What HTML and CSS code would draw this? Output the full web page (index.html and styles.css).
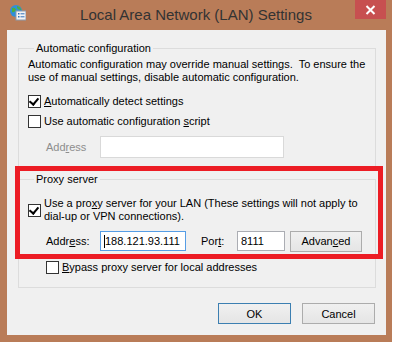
FILE: index.html
```html
<!DOCTYPE html>
<html lang="en">
<head>
    <meta charset="UTF-8">
    <title>Local Area Network (LAN) Settings</title>
    <link rel="stylesheet" href="styles.css">
</head>
<body>
    <div class="window">
        <div class="titlebar">
            <svg class="app-icon" width="17" height="17" viewBox="0 0 17 17">
                <circle cx="7" cy="7" r="6" fill="#2f8fd8"/>
                <path d="M3 4 Q6 3 7 6 Q5 9 3 8 Z" fill="#4cae3e"/>
                <path d="M8 2 Q12 3 12 6 Q9 6 8 4 Z" fill="#4cae3e"/>
                <rect x="7" y="7" width="10" height="9" fill="#f4f4f4" stroke="#8a9bb0" stroke-width="1"/>
                <rect x="9" y="9" width="1.5" height="1.5" fill="#2f6fb8"/>
                <rect x="11.5" y="9.3" width="4" height="1" fill="#2f6fb8"/>
                <rect x="9" y="12" width="1.5" height="1.5" fill="#2f6fb8"/>
                <rect x="11.5" y="12.3" width="4" height="1" fill="#2f6fb8"/>
            </svg>
            <span class="title">Local Area Network (LAN) Settings</span>
            <div class="close-btn">
                <svg width="11" height="10" viewBox="0 0 11 10">
                    <path d="M1.5 1 L9.5 9 M9.5 1 L1.5 9" stroke="#fff" stroke-width="2"/>
                </svg>
            </div>
        </div>

        <div class="client">
            <fieldset class="group group-auto">
                <legend>Automatic configuration</legend>
                <p class="note">Automatic configuration may override manual settings.&nbsp; To ensure the<br>use of manual settings, disable automatic configuration.</p>
                <label class="check">
                    <span class="box checked"></span>
                    <span><u>A</u>utomatically detect settings</span>
                </label>
                <label class="check">
                    <span class="box"></span>
                    <span>Use automatic configuration <u>s</u>cript</span>
                </label>
                <div class="field-row disabled">
                    <span class="field-label">Add<u>r</u>ess</span>
                    <span class="textbox wide"></span>
                </div>
            </fieldset>

            <fieldset class="group group-proxy">
                <legend>Proxy server</legend>
                <label class="check top">
                    <span class="box checked"></span>
                    <span>Use a pro<u>x</u>y server for your LAN (These settings will not apply to<br>dial-up or VPN connections).</span>
                </label>
                <div class="field-row">
                    <span class="field-label">Addr<u>e</u>ss:</span>
                    <span class="textbox addr focused"><span class="caret"></span>188.121.93.111</span>
                    <span class="port-label">Por<u>t</u>:</span>
                    <span class="textbox port">8111</span>
                    <span class="button advanced">Advan<u>c</u>ed</span>
                </div>
                <label class="check indent">
                    <span class="box"></span>
                    <span><u>B</u>ypass proxy server for local addresses</span>
                </label>
            </fieldset>

            <div class="actions">
                <span class="button default">OK</span>
                <span class="button">Cancel</span>
            </div>

            <div class="highlight"></div>
        </div>
    </div>
</body>
</html>
```

FILE: styles.css
```css
:root {
    --frame: #b97c58;
    --face: #f0f0f0;
    --line: #dcdcdc;
    --text: #000;
    --red: #ec1c24;
}

body {
    margin: 0;
    background: #fff;
    font-family: 'Liberation Sans', Arial, sans-serif;
    font-size: 11px;
    color: var(--text);
}

.window {
    width: 392px;
    height: 342px;
    background: var(--frame);
    display: flex;
    flex-direction: column;
    box-sizing: border-box;
}

.titlebar {
    height: 30px;
    display: flex;
    align-items: flex-start;
    position: relative;
}

.app-icon {
    margin: 4px 0 0 9px;
}

.title {
    position: absolute;
    left: 0;
    right: 0;
    top: 6px;
    text-align: center;
    font-size: 15px;
    color: #333;
}

.close-btn {
    margin-left: auto;
    margin-right: 6px;
    width: 31px;
    height: 19px;
    background: #c75050;
    display: flex;
    align-items: center;
    justify-content: center;
    position: relative;
}

.client {
    margin: 0 6px 0 7px;
    height: 305px;
    background: var(--face);
    position: relative;
    padding: 11px 10px 0 11px;
    box-sizing: border-box;
}

.group {
    margin: 0;
    border: 1px solid var(--line);
    padding: 0 8px 0 9px;
    box-sizing: border-box;
}

.group legend {
    padding: 0 2px;
    margin-left: 6px;
    line-height: 14px;
}

.group-auto {
    height: 129px;
    padding-top: 3px;
}

.group-proxy {
    margin-top: 2px;
    height: 116px;
    padding-top: 11px;
}

.note {
    margin: 0 0 7px;
    line-height: 13px;
}

.check {
    display: flex;
    align-items: center;
    gap: 3px;
    height: 20px;
}

.check.top {
    align-items: flex-start;
    line-height: 13px;
    height: auto;
    margin-bottom: 6px;
}

.check.top .box {
    margin-top: 7px;
}

.check.indent {
    margin-left: 18px;
    margin-top: 4px;
}

.box {
    width: 11px;
    height: 11px;
    border: 1px solid #333;
    background: #fff;
    position: relative;
    flex: none;
}

.box.checked::after {
    content: "";
    position: absolute;
    left: 2px;
    top: 0;
    width: 4px;
    height: 7px;
    border: solid #000;
    border-width: 0 2px 2px 0;
    transform: rotate(40deg);
}

.field-row {
    display: flex;
    align-items: center;
    height: 24px;
    margin-left: 18px;
}

.field-row.disabled {
    margin-top: 4px;
    color: #8d8d8d;
}

.field-label {
    width: 54px;
}

.textbox {
    height: 20px;
    border: 1px solid #abadb3;
    background: #fff;
    box-sizing: border-box;
    display: flex;
    align-items: center;
    padding-left: 3px;
}

.textbox.wide {
    width: 184px;
    height: 22px;
    border-color: #d9d9d9;
}

.textbox.addr {
    width: 86px;
}

.textbox.focused {
    border-color: #569de5;
}

.caret {
    width: 1px;
    height: 13px;
    background: #000;
}

.port-label {
    margin-left: 15px;
    width: 36px;
}

.textbox.port {
    width: 48px;
}

.button {
    height: 21px;
    box-sizing: border-box;
    border: 1px solid #acacac;
    background: linear-gradient(#f0f0f0, #e5e5e5);
    display: inline-flex;
    align-items: center;
    justify-content: center;
    width: 73px;
}

.advanced {
    margin-left: 5px;
    width: 72px;
}

.button.default {
    border-color: #3c7fb1;
}

.actions {
    display: flex;
    justify-content: flex-end;
    gap: 11px;
    margin-top: 15px;
    padding-right: 1px;
}

.highlight {
    position: absolute;
    left: 8px;
    top: 136px;
    width: 358px;
    height: 83px;
    border: 5px solid var(--red);
    box-sizing: content-box;
    pointer-events: none;
}
```
